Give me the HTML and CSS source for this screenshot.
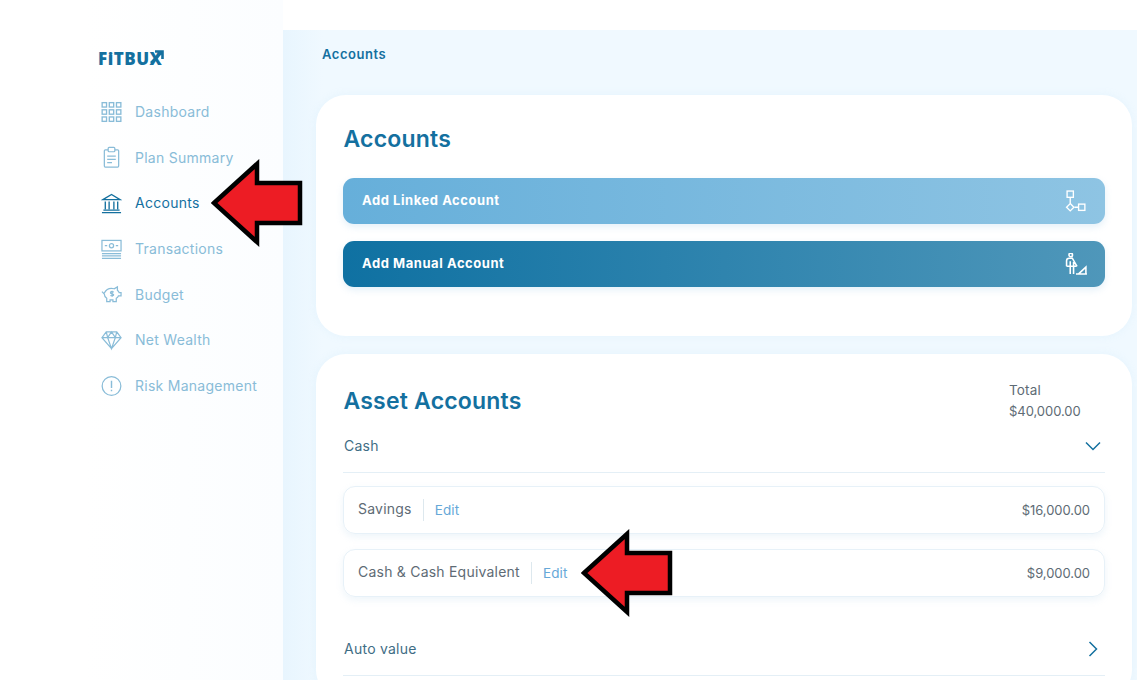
FILE: index.html
```html
<!DOCTYPE html>
<html lang="en">
<head>
<meta charset="utf-8">
<title>Accounts</title>
<link rel="stylesheet" href="styles.css">
</head>
<body>
<div class="app">
  <aside class="sidebar">
    <div class="logo"><span>FiTBUX</span><svg class="logo-arrow" viewBox="0 0 15 15"><path d="M2 14 13 3M6 2.500h7.500V10" fill="none" stroke="#14709f" stroke-width="2.600"/></svg></div>
    <nav class="nav">
      <a class="nav-item"><svg class="nav-icon" viewBox="0 0 22 22"><g fill="none" stroke="currentColor" stroke-width="1.400"><rect x="1.200" y="1.200" width="4.600" height="4.600"/><rect x="8.700" y="1.200" width="4.600" height="4.600"/><rect x="16.200" y="1.200" width="4.600" height="4.600"/><rect x="1.200" y="8.700" width="4.600" height="4.600"/><rect x="8.700" y="8.700" width="4.600" height="4.600"/><rect x="16.200" y="8.700" width="4.600" height="4.600"/><rect x="1.200" y="16.200" width="4.600" height="4.600"/><rect x="8.700" y="16.200" width="4.600" height="4.600"/><rect x="16.200" y="16.200" width="4.600" height="4.600"/></g></svg>Dashboard</a>
      <a class="nav-item"><svg class="nav-icon" viewBox="0 0 22 22"><g fill="none" stroke="currentColor" stroke-width="1.300"><path d="M7.500 3.500H4.500a1 1 0 0 0-1 1v16a1 1 0 0 0 1 1h13a1 1 0 0 0 1-1v-16a1 1 0 0 0-1-1h-3"/><rect x="7.500" y="1" width="7" height="4.500" rx="1"/><path d="M6.500 10h9M6.500 13.500h9M6.500 17h5"/></g></svg>Plan Summary</a>
      <a class="nav-item active"><svg class="nav-icon" viewBox="0 0 22 22"><g fill="none" stroke="currentColor" stroke-width="1.400"><path d="M2 7.500 11 2l9 5.500zM4.500 9.500v8M8.500 9.500v8M13.500 9.500v8M17.500 9.500v8M2.500 18.500h17M1 21h20"/></g></svg>Accounts</a>
      <a class="nav-item"><svg class="nav-icon" viewBox="0 0 22 22"><g fill="none" stroke="currentColor" stroke-width="1.300"><rect x="1" y="2" width="20" height="11"/><circle cx="11" cy="7.500" r="2.200"/><path d="M4 7.500h2.500M15.500 7.500H18M1 15.800h20M1 18.300h20M1 20.800h20"/></g></svg>Transactions</a>
      <a class="nav-item"><svg class="nav-icon" viewBox="0 0 22 22"><g fill="none" stroke="currentColor" stroke-width="1.300"><path d="M1 8.500 3.500 11c0 2 1 3.500 2.500 4.500V19h3.500v-1.800h3V19H16v-3.500c1-.7 1.700-1.400 2.200-2.500H21V9.500h-2c-.4-1-1-1.800-1.800-2.500V3.500L13.800 5.500C9.500 4.500 5.500 6 3.500 10"/><path d="M13.300 9c-1.700-1-3.700-.4-3.300.9.400 1.100 3.400.7 3.300 2 0 1.200-2.100 1.300-3.500.6M11.600 7.500V14"/></g></svg>Budget</a>
      <a class="nav-item"><svg class="nav-icon" viewBox="0 0 22 22"><g fill="none" stroke="currentColor" stroke-width="1.300"><path d="M5.500 2.500h11L21 8.500 11 20 1 8.500zM1 8.500h20M7 8.500 11 20l4-11.500M5.500 2.500 7 8.500l4-6 4 6 1.500-6"/></g></svg>Net Wealth</a>
      <a class="nav-item"><svg class="nav-icon" viewBox="0 0 22 22"><g fill="none" stroke="currentColor" stroke-width="1.300"><circle cx="11" cy="11" r="9.800"/><path d="M11 5.500v7.500M11 15v1.500" stroke-width="1.500"/></g></svg>Risk Management</a>
    </nav>
  </aside>
  <main class="main">
    <div class="crumb">Accounts</div>
    <section class="card card-top">
      <h1 class="title">Accounts</h1>
      <button class="action action-light"><span class="action-label">Add Linked Account</span>
        <svg class="action-icon" viewBox="0 0 22 22"><g fill="none" stroke="#fff" stroke-width="1.300"><rect x="2" y="1" width="6" height="6"/><path d="M5 7v6M9 16.500h4"/><path d="M5 13l3.500 3.500L5 20l-3.500-3.500z"/><rect x="13" y="13.500" width="6" height="6"/></g></svg></button>
      <button class="action action-dark"><span class="action-label">Add Manual Account</span>
        <svg class="action-icon" viewBox="0 0 22 22"><g fill="none" stroke="#fff" stroke-width="1.500"><circle cx="5.500" cy="1.800" r="1.700"/><path d="M1.500 12.700V7.500Q1.500 5 4 5h3l4.500 7.700M1.500 12.700H11M5 8v12M8.200 8.500V20M13 20l7-6.500V20zM10.500 20H21"/></g></svg></button>
    </section>
    <section class="card">
      <div class="asset-head">
        <h2 class="title">Asset Accounts</h2>
        <div class="total">Total<br><span class="figure">$40,000.00</span></div>
      </div>
      <div class="group">
        <span>Cash</span>
        <svg class="chev" viewBox="0 0 16 16"><path d="M1 4.500 8 11.500 15 4.500" fill="none" stroke="#14709f" stroke-width="1.500"/></svg>
      </div>
      <div class="rows">
        <div class="row"><span class="row-name">Savings</span><a class="edit">Edit</a><span class="amount figure">$16,000.00</span></div>
        <div class="row"><span class="row-name">Cash &amp; Cash Equivalent</span><a class="edit">Edit</a><span class="amount figure">$9,000.00</span></div>
      </div>
      <div class="group group-auto">
        <span>Auto value</span>
        <svg class="chev" viewBox="0 0 16 16"><path d="M4.500 1 11.500 8 4.500 15" fill="none" stroke="#14709f" stroke-width="1.500"/></svg>
      </div>
    </section>
  </main>
</div>
<svg class="pointer pointer-nav" viewBox="0 0 94 90"><path d="M3 44 46 5v19h43v40H46v19z" fill="#ed1c24" stroke="#000" stroke-width="4.500" stroke-linejoin="miter"/></svg>
<svg class="pointer pointer-edit" viewBox="0 0 94 90"><path d="M3 44 46 5v19h43v40H46v19z" fill="#ed1c24" stroke="#000" stroke-width="4.500" stroke-linejoin="miter"/></svg>
</body>
</html>
```

FILE: styles.css
```css
* { box-sizing: border-box; }
html, body { margin: 0; height: 680px; overflow: hidden; background: #fff; }
body { font-family: "Inter", "Liberation Sans", sans-serif; font-size: 14px; color: #14709f; position: relative; }
.app { display: flex; height: 680px; padding-left: 85px; }
.sidebar { width: 198px; flex: none; background: linear-gradient(90deg, #fff, #fbfdff); padding-top: 47px; }
.logo { display: flex; align-items: flex-start; padding-left: 13px; height: 26px; font-family: "Open Sans", sans-serif; font-weight: 800; font-size: 17px; letter-spacing: .5px; color: #14709f; line-height: 23px; }
.logo-arrow { width: 15px; height: 15px; margin: 2px 0 0 -13px; }
.nav { display: flex; flex-direction: column; margin-top: 27.500px; gap: 23.700px; }
.nav-item { display: flex; align-items: center; gap: 13px; height: 22px; padding-left: 16px; color: #89bcd8; letter-spacing: .27px; }
.nav-item.active { color: #14709f; }
.nav-icon { width: 21px; height: 22px; flex: none; }
.main { flex: 1; margin-top: 30px; background: linear-gradient(90deg, #e8f5fe, #f0f9ff 40px); padding: 0 5px 0 33px; min-width: 0; overflow: hidden; }
.crumb { font-weight: 600; font-size: 13px; height: 65px; padding: 16px 0 0 6px; letter-spacing: .55px; }
.card { background: #fff; border-radius: 30px; padding: 24px 27px; box-shadow: 0 0 10px rgba(160, 205, 235, .12); margin-bottom: 18px; }
.card-top { height: 241px; padding-top: 28px; }
.title { margin: 0 0 0 .5px; font-size: 23px; line-height: 32px; font-weight: 600; color: #14709f; letter-spacing: .2px; }
.action { display: flex; align-items: center; justify-content: space-between; width: 100%; height: 46px; border: 0; border-radius: 11px; padding: 0 16px 0 19px; color: #fff; font: 700 13px "Inter", sans-serif; letter-spacing: .55px; box-shadow: 0 3px 7px rgba(120, 180, 220, .2); }
.action-label { padding-bottom: 2px; }
.action-light { margin-top: 23px; background: linear-gradient(90deg, #66afda, #8ec4e3); }
.action-dark { margin-top: 17px; background: linear-gradient(90deg, #0f71a2, #4f97ba); }
.action-icon { width: 23px; height: 23px; margin-right: 1px; }
.asset-head { display: flex; justify-content: space-between; align-items: flex-start; height: 59px; }
.asset-head .title { margin-top: 7px; }
.total { width: 96px; font-size: 13.500px; line-height: 21px; color: #5e6b75; margin-top: 2px; letter-spacing: .15px; }
.figure { font-size: 13px; letter-spacing: -.05px; }
.group { display: flex; align-items: flex-start; justify-content: space-between; line-height: 18px; padding-left: 1px; color: #3f6d85; letter-spacing: .25px; border-bottom: 1px solid #e4eff6; height: 36px; }
.rows { display: flex; flex-direction: column; gap: 15px; margin-top: 13px; }
.row { display: flex; align-items: center; height: 48px; padding: 0 14px; border: 1px solid #e7f1f8; border-radius: 12px; box-shadow: 0 3px 7px rgba(150, 195, 225, .16); color: #5e6b75; letter-spacing: .22px; }
.row-name { padding: 0 11px 2px 0; border-right: 1px solid #dde8ee; line-height: 20px; }
.edit { margin-left: 11px; color: #66a8d8; font-size: 13.500px; letter-spacing: .15px; }
.amount { margin-left: auto; letter-spacing: -.05px; }
.group-auto { margin-top: 43px; }
.chev { width: 16px; height: 16px; margin-right: 4px; margin-top: 1px; }
.pointer { position: absolute; width: 94px; height: 90px; }
.pointer-nav { left: 211px; top: 159px; }
.pointer-edit { left: 581px; top: 529px; }
```
